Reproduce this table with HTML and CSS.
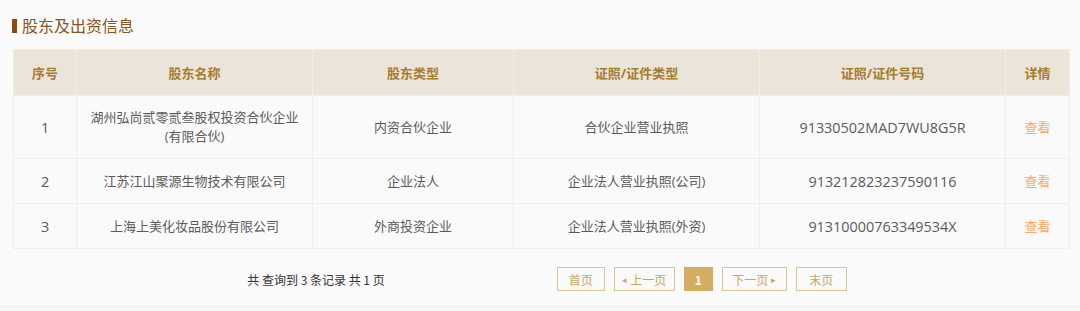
FILE: index.html
```html
<!DOCTYPE html>
<html lang="zh">
<head>
<meta charset="utf-8">
<link rel="stylesheet" href="styles.css">
</head>
<body>
<div class="page">
  <h2 class="title"><span class="bar"></span>股东及出资信息</h2>
  <table class="grid">
    <colgroup>
      <col class="c1"><col class="c2"><col class="c3"><col class="c4"><col class="c5"><col class="c6">
    </colgroup>
    <thead>
      <tr><th>序号</th><th>股东名称</th><th>股东类型</th><th>证照/证件类型</th><th>证照/证件号码</th><th>详情</th></tr>
    </thead>
    <tbody>
      <tr class="tall"><td class="num">1</td><td>湖州弘尚贰零贰叁股权投资合伙企业<br>(有限合伙)</td><td>内资合伙企业</td><td>合伙企业营业执照</td><td class="num">91330502MAD7WU8G5R</td><td><span class="view">查看</span></td></tr>
      <tr><td class="num">2</td><td>江苏江山聚源生物技术有限公司</td><td>企业法人</td><td>企业法人营业执照(公司)</td><td class="num">913212823237590116</td><td><span class="view">查看</span></td></tr>
      <tr><td class="num">3</td><td>上海上美化妆品股份有限公司</td><td>外商投资企业</td><td>企业法人营业执照(外资)</td><td class="num">91310000763349534X</td><td><span class="view">查看</span></td></tr>
    </tbody>
  </table>
  <div class="pager">
    <div class="summary">共 查询到 3 条记录 共 1 页</div>
    <div class="btns">
      <span class="btn w48">首页</span>
      <span class="btn w60"><span class="tri">◂</span>上一页</span>
      <span class="btn cur">1</span>
      <span class="btn w64">下一页<span class="tri">▸</span></span>
      <span class="btn w50">末页</span>
    </div>
  </div>
</div>
</body>
</html>
```
FILE: styles.css
```css
html, body {
  margin: 0;
  padding: 0;
  background: #fafafa;
  font-family: "Open Sans", "Noto Sans CJK SC", sans-serif;
}
.page {
  padding: 16px 11px 0 13px;
  height: 290px;
  border-bottom: 1px solid #ececec;
}
.title {
  margin: 0 0 13px -1px;
  font-size: 16px;
  font-weight: normal;
  color: #8a5523;
  line-height: 20px;
  display: flex;
  align-items: center;
}
.bar {
  display: inline-block;
  width: 5px;
  height: 14px;
  background: #8a4a10;
  margin-right: 5px;
}
.grid {
  width: 1056px;
  border-collapse: collapse;
  table-layout: fixed;
  font-size: 13px;
}
.c1 { width: 63px; }
.c2 { width: 236px; }
.c3 { width: 201px; }
.c4 { width: 246px; }
.c5 { width: 246px; }
.c6 { width: 64px; }
.grid th {
  background: #ebe4d8;
  color: #a67c2e;
  font-weight: bold;
  height: 45px;
  border: 1px solid #f1ede6;
  padding: 0;
}
.grid td {
  border: 1px solid #efefef;
  color: #5a5a5a;
  text-align: center;
  height: 44px;
  padding: 0;
  line-height: 19px;
}
.grid td.num { font-size: 14.4px; }
.grid tr.tall td { height: 62px; }
.view {
  color: #ffa866;
  cursor: pointer;
}
.pager {
  display: flex;
  justify-content: center;
  align-items: center;
  gap: 172px;
  margin-top: 18px;
  padding-left: 12px;
}
.summary {
  font-size: 12px;
  color: #333;
  font-family: "Noto Sans CJK SC", sans-serif;
}
.btns {
  display: flex;
  gap: 9px;
  font-family: "Noto Sans CJK SC", sans-serif;
}
.btn {
  box-sizing: border-box;
  height: 24px;
  border: 1px solid #dcc38f;
  color: #c9a466;
  font-size: 12px;
  display: flex;
  align-items: center;
  justify-content: center;
  gap: 3px;
}
.w48 { width: 48px; }
.w60 { width: 61px; }
.w64 { width: 65px; }
.w50 { width: 51px; }
.btn.cur {
  width: 29px;
  background: #d4ac62;
  border-color: #d4ac62;
  color: #fff;
  font-weight: bold;
}
.tri {
  font-size: 9px;
  color: #c9a466;
}
```
